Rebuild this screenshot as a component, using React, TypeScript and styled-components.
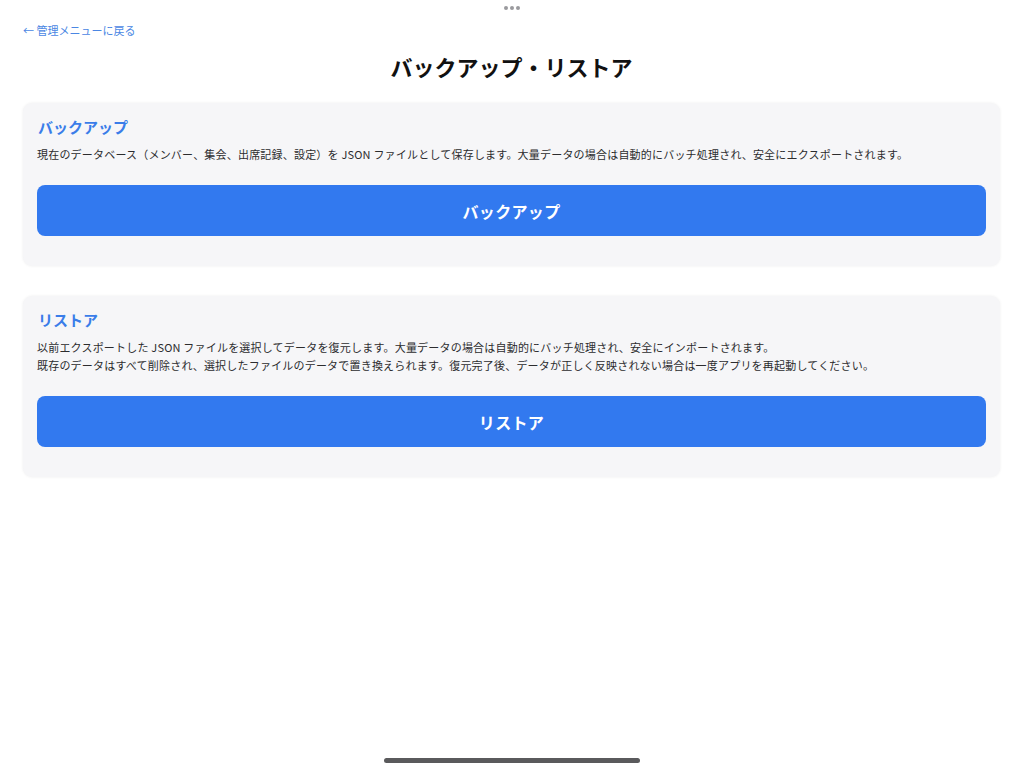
import styled, { createGlobalStyle } from 'styled-components';

const GlobalStyle = createGlobalStyle`
  html, body {
    margin: 0;
    padding: 0;
    background: #ffffff;
  }
  body {
    font-family: "Noto Sans CJK JP", "Noto Sans", sans-serif;
    color: #1c1c1e;
  }
`;

const Page = styled.div`
  min-height: 768px;
  box-sizing: border-box;
  padding: 22px 24px 0 23px;
  display: flex;
  flex-direction: column;
`;

const BackLink = styled.a`
  align-self: flex-start;
  font-size: 11px;
  line-height: 16px;
  color: #4b87e3;
  text-decoration: none;
  cursor: pointer;
`;

const Title = styled.h1`
  margin: 13px 0 22px;
  text-align: center;
  font-size: 22px;
  line-height: 30px;
  font-weight: 700;
  color: #111;
`;

const Sections = styled.div`
  display: flex;
  flex-direction: column;
  gap: 30px;
`;

const Card = styled.section`
  background: #f6f6f8;
  border-radius: 9px;
  box-shadow: 0 0 3px rgba(0, 0, 0, 0.07);
  padding: 14px 14px 30px 14px;
  display: flex;
  flex-direction: column;
`;

const CardTitle = styled.h2`
  margin: 0 0 8px 1px;
  font-size: 15px;
  line-height: 20px;
  font-weight: 700;
  color: #3a7de9;
`;

const Desc = styled.p`
  margin: 0 0 22px;
  font-size: 11px;
  line-height: 18px;
  letter-spacing: 0.2px;
  color: #2c2c2e;
`;

const ActionButton = styled.button`
  height: 51px;
  border: none;
  border-radius: 8px;
  background: #3279ef;
  color: #ffffff;
  font-family: inherit;
  font-size: 16px;
  font-weight: 700;
  letter-spacing: 0.02em;
  cursor: pointer;
`;

const GrabDots = styled.div`
  position: fixed;
  top: 6px;
  left: 50%;
  transform: translateX(-50%);
  display: flex;
  gap: 2px;
`;

const Dot = styled.span`
  width: 4px;
  height: 4px;
  border-radius: 50%;
  background: #9a9a9e;
`;

const HomeIndicator = styled.div`
  position: fixed;
  bottom: 5px;
  left: 50%;
  transform: translateX(-50%);
  width: 256px;
  height: 5px;
  border-radius: 3px;
  background: #5a5a5c;
`;

export default function App() {
  return (
    <>
      <GlobalStyle />
      <GrabDots>
        <Dot />
        <Dot />
        <Dot />
      </GrabDots>
      <Page>
        <BackLink>← 管理メニューに戻る</BackLink>
        <Title>バックアップ・リストア</Title>
        <Sections>
          <Card>
            <CardTitle>バックアップ</CardTitle>
            <Desc>
              現在のデータベース（メンバー、集会、出席記録、設定）を JSON ファイルとして保存します。大量データの場合は自動的にバッチ処理され、安全にエクスポートされます。
            </Desc>
            <ActionButton>バックアップ</ActionButton>
          </Card>
          <Card>
            <CardTitle>リストア</CardTitle>
            <Desc>
              以前エクスポートした JSON ファイルを選択してデータを復元します。大量データの場合は自動的にバッチ処理され、安全にインポートされます。
              <br />
              既存のデータはすべて削除され、選択したファイルのデータで置き換えられます。復元完了後、データが正しく反映されない場合は一度アプリを再起動してください。
            </Desc>
            <ActionButton>リストア</ActionButton>
          </Card>
        </Sections>
      </Page>
      <HomeIndicator />
    </>
  );
}
